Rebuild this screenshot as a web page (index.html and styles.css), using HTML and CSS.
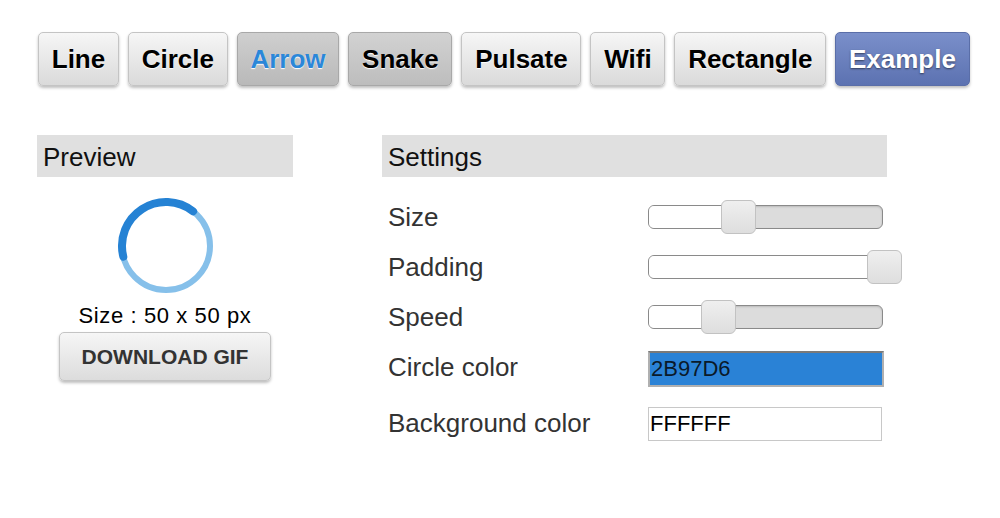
FILE: index.html
```html
<!DOCTYPE html>
<html lang="en">
<head>
    <meta charset="UTF-8">
    <title>Loader Generator</title>
    <link rel="stylesheet" href="styles.css">
</head>
<body>
    <!-- loader types -->
    <div class="tabs">
        <button class="tab">Line</button>
        <button class="tab">Circle</button>
        <button class="tab active">Arrow</button>
        <button class="tab pressed">Snake</button>
        <button class="tab">Pulsate</button>
        <button class="tab">Wifi</button>
        <button class="tab">Rectangle</button>
        <button class="tab example">Example</button>
    </div>

    <div class="panels">
        <div class="preview">
            <h3 class="panel-title">Preview</h3>
            <svg class="spinner" width="100" height="100" viewBox="0 0 100 100">
                <circle cx="50" cy="50" r="44" fill="none" stroke="#86c0ea" stroke-width="6"/>
                <path d="M7.3 60.6 A44 44 0 0 1 77.1 15.3" fill="none" stroke="#2582d4" stroke-width="8" stroke-linecap="round"/>
            </svg>
            <div class="size-info">Size : 50 x 50 px</div>
            <button class="download">DOWNLOAD GIF</button>
        </div>

        <div class="settings">
            <h3 class="panel-title">Settings</h3>
            <div class="row">
                <label>Size</label>
                <div class="slider">
                    <div class="slider-fill" style="width: 80px"></div>
                    <div class="slider-thumb" style="left: 72px"></div>
                </div>
            </div>
            <div class="row">
                <label>Padding</label>
                <div class="slider">
                    <div class="slider-fill" style="width: 235px"></div>
                    <div class="slider-thumb" style="left: 218px"></div>
                </div>
            </div>
            <div class="row">
                <label>Speed</label>
                <div class="slider">
                    <div class="slider-fill" style="width: 60px"></div>
                    <div class="slider-thumb" style="left: 52px"></div>
                </div>
            </div>
            <div class="row">
                <label>Circle color</label>
                <input class="color-input selected" type="text" value="2B97D6">
            </div>
            <div class="row row-last">
                <label>Background color</label>
                <input class="color-input" type="text" value="FFFFFF">
            </div>
        </div>
    </div>
</body>
</html>
```

FILE: styles.css
```css
body {
    margin: 0;
    padding: 32px 30px 0 37px;
    font-family: "Liberation Sans", Arial, sans-serif;
    background-color: #ffffff;
    color: #333;
}

/* Tabs */
.tabs {
    display: flex;
    gap: 9px;
    margin-left: 1px;
}
.tab {
    height: 54px;
    padding: 0 12.75px;
    font-family: "Liberation Sans", Arial, sans-serif;
    font-size: 26px;
    font-weight: bold;
    color: #000;
    text-shadow: 0 1px 1px #fff;
    background: linear-gradient(#f6f6f6, #dadada);
    border: 1px solid #c4c4c4;
    border-radius: 5px;
    box-shadow: 0 2px 3px rgba(0, 0, 0, 0.25);
    cursor: pointer;
}
.tab.active {
    color: #2b87d8;
    background: linear-gradient(#cfcfcf, #b9b9b9);
    border-color: #a8a8a8;
}
.tab.pressed {
    background: linear-gradient(#d2d2d2, #bdbdbd);
    border-color: #a8a8a8;
}
.tab.example {
    color: #fff;
    text-shadow: 0 1px 2px rgba(0, 0, 0, 0.5);
    background: linear-gradient(#7a8fca, #5c72b1);
    border-color: #5a6ea8;
}

/* Panels */
.panels {
    display: flex;
    gap: 89px;
    margin-top: 49px;
}
.panel-title {
    margin: 0;
    height: 42px;
    line-height: 44px;
    padding-left: 6px;
    font-size: 26px;
    font-weight: normal;
    color: #111;
    background-color: #e0e0e0;
}

.preview {
    width: 256px;
    display: flex;
    flex-direction: column;
    align-items: center;
}
.preview .panel-title {
    align-self: stretch;
}
.spinner {
    display: block;
    margin-top: 19px;
    margin-left: 1px;
}
.size-info {
    margin-top: 7px;
    font-size: 22px;
    color: #000;
    letter-spacing: 0.6px;
}
.download {
    margin-top: 3px;
    width: 212px;
    height: 49px;
    font-family: "Liberation Sans", Arial, sans-serif;
    font-size: 21px;
    font-weight: bold;
    color: #333;
    background: linear-gradient(#f6f6f6, #dcdcdc);
    border: 1px solid #c4c4c4;
    border-radius: 5px;
    box-shadow: 0 2px 3px rgba(0, 0, 0, 0.25);
    cursor: pointer;
}

.settings {
    width: 505px;
}
.row {
    display: flex;
    align-items: center;
    height: 50px;
    padding-left: 6px;
}
.row:first-of-type {
    margin-top: 15px;
}
.row-last {
    height: 62px;
}
.row label {
    width: 260px;
    font-size: 26px;
    color: #333;
}

/* Sliders */
.slider {
    position: relative;
    width: 233px;
    height: 22px;
    border: 1px solid #8a8a8a;
    border-radius: 6px;
    background-color: #dcdcdc;
    box-shadow: inset 0 1px 2px rgba(0, 0, 0, 0.15);
}
.slider-fill {
    height: 100%;
    background-color: #fff;
    border-radius: 5px 0 0 5px;
}
.slider-thumb {
    position: absolute;
    top: -6px;
    width: 33px;
    height: 32px;
    background: linear-gradient(#efefef, #dedede);
    border: 1px solid #c2c2c2;
    border-radius: 6px;
}

/* Colour fields */
.color-input {
    width: 230px;
    height: 32px;
    padding: 0 1px;
    font-family: "Liberation Sans", Arial, sans-serif;
    font-size: 22px;
    color: #000;
    background-color: #fff;
    border: 1px solid #c8c8c8;
    outline: none;
}
.color-input.selected {
    background-color: #2a82d6;
    color: #0a1a2a;
    height: 32px;
    margin-top: 4px;
    border: 2px solid #b0b0b0;
    border-top-color: #7a7a7a;
}
.row-last .color-input {
    margin-top: 2px;
}
```
